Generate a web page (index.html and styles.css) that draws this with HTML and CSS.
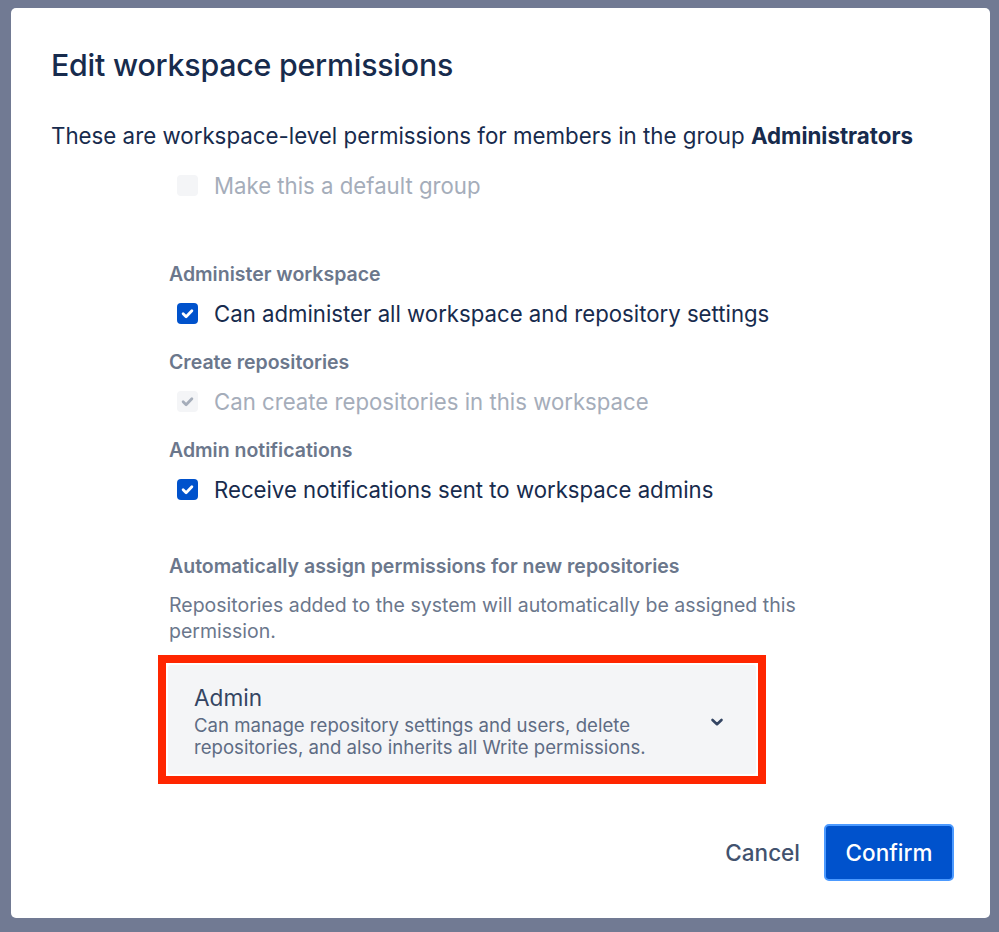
FILE: index.html
```html
<!DOCTYPE html>
<html lang="en">
<head>
<meta charset="utf-8">
<title>Edit workspace permissions</title>
<link rel="stylesheet" href="styles.css">
</head>
<body>
<div class="modal">
  <h1 class="title">Edit workspace permissions</h1>
  <p class="intro">These are workspace-level permissions for members in the group <strong>Administrators</strong></p>
  <div class="form">
    <label class="row disabled">
      <span class="box box-disabled"></span>
      <span class="text">Make this a default group</span>
    </label>

    <div class="group-label first">Administer workspace</div>
    <label class="row">
      <span class="box box-checked"><svg viewBox="0 0 24 24" width="21" height="21"><path d="M7 12.2l3.4 3.4 6.6-6.8" fill="none" stroke="#fff" stroke-width="3.2" stroke-linecap="round" stroke-linejoin="round"/></svg></span>
      <span class="text">Can administer all workspace and repository settings</span>
    </label>

    <div class="group-label">Create repositories</div>
    <label class="row disabled">
      <span class="box box-disabled"><svg viewBox="0 0 24 24" width="21" height="21"><path d="M7 12.2l3.4 3.4 6.6-6.8" fill="none" stroke="#A5ADBA" stroke-width="3.2" stroke-linecap="round" stroke-linejoin="round"/></svg></span>
      <span class="text">Can create repositories in this workspace</span>
    </label>

    <div class="group-label">Admin notifications</div>
    <label class="row">
      <span class="box box-checked"><svg viewBox="0 0 24 24" width="21" height="21"><path d="M7 12.2l3.4 3.4 6.6-6.8" fill="none" stroke="#fff" stroke-width="3.2" stroke-linecap="round" stroke-linejoin="round"/></svg></span>
      <span class="text">Receive notifications sent to workspace admins</span>
    </label>

    <div class="group-label auto">Automatically assign permissions for new repositories</div>
    <p class="helper">Repositories added to the system will automatically be assigned this permission.</p>
  </div>

  <div class="highlight">
    <div class="select">
      <div class="select-text">
        <div class="select-title">Admin</div>
        <div class="select-desc">Can manage repository settings and users, delete repositories, and also inherits all Write permissions.</div>
      </div>
      <svg class="chevron" viewBox="0 0 16 16" width="16" height="16"><path d="M3.5 6l4.5 4.2L12.5 6" fill="none" stroke="#344563" stroke-width="2.6" stroke-linecap="round" stroke-linejoin="round"/></svg>
    </div>
  </div>

  <div class="footer">
    <button class="btn btn-subtle" type="button">Cancel</button>
    <button class="btn btn-primary" type="button">Confirm</button>
  </div>
</div>
</body>
</html>
```

FILE: styles.css
```css
html, body {
  margin: 0;
  padding: 0;
}
body {
  background: #717a93;
  width: 999px;
  height: 932px;
  overflow: hidden;
  font-family: Inter, "Noto Sans", "Liberation Sans", sans-serif;
  color: #172b4d;
}
.modal {
  box-sizing: border-box;
  margin: 8px 0 0 11px;
  width: 979px;
  height: 910px;
  background: #ffffff;
  border-radius: 5px;
  padding: 39px 36px 36px 40px;
  display: flex;
  flex-direction: column;
}
.title {
  margin: 0;
  font-size: 30.3px;
  line-height: 36px;
  font-weight: 500;
  letter-spacing: -0.2px;
  color: #172b4d;
}
.intro {
  margin: 37px 0 0 0;
  font-size: 22.3px;
  line-height: 32px;
  color: #172b4d;
  white-space: nowrap;
}
.intro strong {
  font-weight: 700;
}
.form {
  margin-left: 118px;
  margin-top: 17px;
  display: flex;
  flex-direction: column;
}
.row {
  display: flex;
  align-items: center;
  height: 32px;
  gap: 16px;
  font-size: 22.2px;
  color: #172b4d;
  padding-left: 8px;
}
.row.disabled {
  color: #a5adba;
}
.box {
  width: 21px;
  height: 21px;
  border-radius: 4px;
  flex: none;
  display: flex;
}
.box-checked {
  background: #0052cc;
}
.box-disabled {
  background: #f4f5f7;
}
.group-label {
  font-size: 19.5px;
  line-height: 24px;
  font-weight: 600;
  color: #6b778c;
  margin-top: 21px;
  margin-bottom: 11px;
}
.group-label.first {
  margin-top: 61px;
}
.group-label.auto {
  margin-top: 49px;
  margin-bottom: 14px;
}
.helper {
  margin: 0;
  font-size: 19.5px;
  line-height: 26px;
  color: #6b778c;
  width: 660px;
}
.highlight {
  margin: 11px 0 0 107px;
  width: 608px;
  height: 129px;
  box-sizing: border-box;
  border: 8px solid #ff2600;
  padding: 2px;
  background: #ffffff;
}
.select {
  box-sizing: border-box;
  height: 100%;
  background: #f4f5f7;
  border-radius: 3px;
  display: flex;
  align-items: center;
  padding: 4px 31px 0 26px;
}
.select-text {
  flex: 1;
}
.select-title {
  font-size: 22.6px;
  line-height: 26px;
  color: #344563;
}
.select-desc {
  margin-top: 3px;
  font-size: 18.6px;
  line-height: 22px;
  color: #5e6c84;
  width: 500px;
}
.chevron {
  flex: none;
}
.footer {
  margin-top: 40px;
  display: flex;
  justify-content: flex-end;
  align-items: center;
  gap: 8px;
}
.btn {
  font-family: inherit;
  font-size: 22.5px;
  font-weight: 500;
  border-radius: 5px;
  height: 57px;
  cursor: pointer;
}
.btn-subtle {
  background: transparent;
  border: none;
  color: #42526e;
  padding: 0 16px;
}
.btn-primary {
  background: #0052cc;
  color: #ffffff;
  border: 2px solid #4c9aff;
  padding: 0 10px;
  width: 130px;
}
```
